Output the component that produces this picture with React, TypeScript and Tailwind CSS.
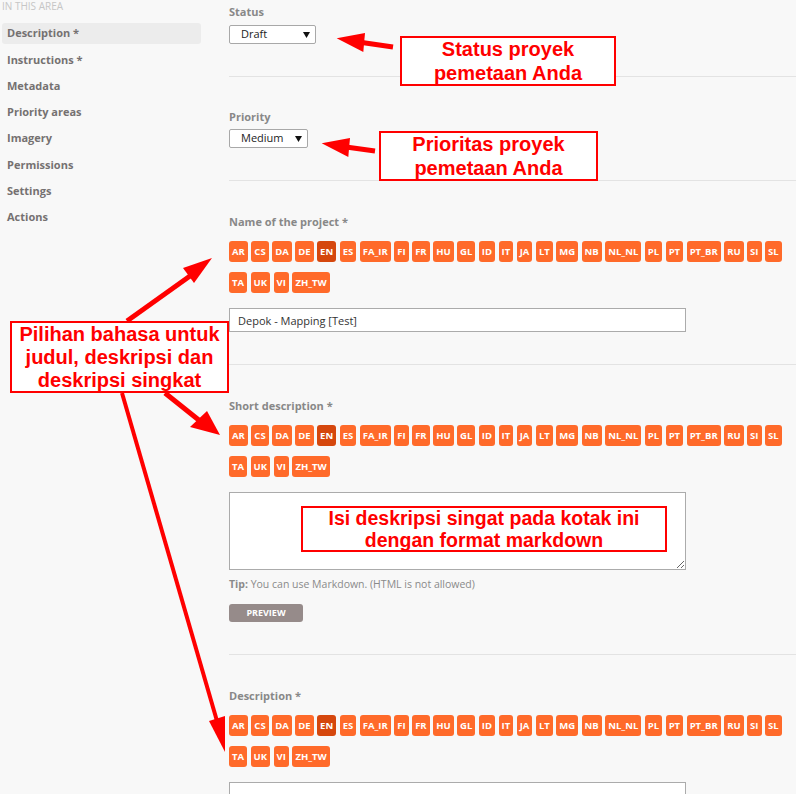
import clsx from "clsx";

const NAV = [
  "Description *",
  "Instructions *",
  "Metadata",
  "Priority areas",
  "Imagery",
  "Permissions",
  "Settings",
  "Actions",
];

const LANGS_ROW1 = [
  "AR", "CS", "DA", "DE", "EN", "ES", "FA_IR", "FI", "FR", "HU", "GL", "ID",
  "IT", "JA", "LT", "MG", "NB", "NL_NL", "PL", "PT", "PT_BR", "RU", "SI", "SL",
];
const LANGS_ROW2 = ["TA", "UK", "VI", "ZH_TW"];

function LangButtons() {
  const badge = (code: string) => (
    <span
      key={code}
      className={clsx(
        "h-[21px] px-[3px] flex items-center rounded-[3px] text-[9.5px] font-bold text-white leading-none",
        code === "EN" ? "bg-[#d5470d]" : "bg-[#ff6a2a]"
      )}
    >
      {code}
    </span>
  );
  return (
    <div className="mt-[12px] flex flex-col gap-[10px]">
      <div className="flex gap-[3.5px]">{LANGS_ROW1.map(badge)}</div>
      <div className="flex gap-[3.5px]">{LANGS_ROW2.map(badge)}</div>
    </div>
  );
}

function FakeSelect({ value, width }: { value: string; width: string }) {
  return (
    <div
      className={clsx(
        "h-[19px] bg-white border border-[#a8a8a8] rounded-[2px] flex items-center justify-between pl-[11px] pr-[5px] text-[11px] text-[#222]",
        width
      )}
    >
      <span>{value}</span>
      <svg width="7" height="6" viewBox="0 0 7 6">
        <path d="M0 0 L7 0 L3.5 6 Z" fill="#111" />
      </svg>
    </div>
  );
}

function Label({ children }: { children: string }) {
  return <div className="text-[11px] leading-[14px] font-bold text-[#888]">{children}</div>;
}

function Note({ className, lines, size }: { className: string; lines: string[]; size: string }) {
  return (
    <div
      className={clsx(
        "absolute bg-white border-2 border-[#ff0000] flex flex-col items-center justify-center font-['Liberation_Sans',Arial,sans-serif] font-bold text-[#ff0000] text-center",
        size,
        className
      )}
    >
      {lines.map((l) => (
        <span key={l} className="whitespace-nowrap">{l}</span>
      ))}
    </div>
  );
}

export default function App() {
  return (
    <div className="relative w-[796px] h-[794px] overflow-hidden bg-[#f8f8f8] flex font-['Open_Sans',sans-serif]">
      <aside className="w-[229px] shrink-0 pl-[2px] pr-[28px]">
        <div className="text-[10px] leading-[12px] text-[#c6c6c6] uppercase">In this area</div>
        <nav className="mt-[11px] flex flex-col gap-[5.3px]">
          {NAV.map((item, i) => (
            <div
              key={item}
              className={clsx(
                "h-[21px] flex items-center pl-[5px] rounded-[3px] text-[11px] font-bold text-[#757171]",
                i === 0 && "bg-[#ececec]"
              )}
            >
              {item}
            </div>
          ))}
        </nav>
      </aside>

      <main className="flex-1">
        <section className="pt-[5px] pb-[32px] border-b border-[#e3e3e3]">
          <Label>Status</Label>
          <div className="mt-[6px]">
            <FakeSelect value="Draft" width="w-[87px]" />
          </div>
        </section>

        <section className="pt-[33px] pb-[32px] border-b border-[#e3e3e3]">
          <Label>Priority</Label>
          <div className="mt-[5px]">
            <FakeSelect value="Medium" width="w-[79px]" />
          </div>
        </section>

        <section className="pt-[34px] pb-[32px] border-b border-[#e3e3e3]">
          <Label>Name of the project *</Label>
          <LangButtons />
          <input
            readOnly
            value="Depok - Mapping [Test]"
            className="mt-[15px] block w-[457px] h-[24px] bg-white border border-[#ababab] pl-[8px] text-[11px] text-[#333] outline-none"
          />
        </section>

        <section className="pt-[34px] pb-[32px] border-b border-[#e3e3e3]">
          <Label>Short description *</Label>
          <LangButtons />
          <textarea
            readOnly
            className="mt-[15px] block w-[457px] h-[78px] bg-white border border-[#ababab] outline-none"
          />
          <p className="mt-[7px] text-[10.5px] leading-[14px] text-[#8a8a8a]">
            <b>Tip:</b> You can use Markdown. (HTML is not allowed)
          </p>
          <button className="mt-[13px] block w-[74px] h-[18px] rounded-[3px] bg-[#968b8a] text-white text-[9px] font-bold uppercase">
            Preview
          </button>
        </section>

        <section className="pt-[34px]">
          <Label>Description *</Label>
          <LangButtons />
          <textarea
            readOnly
            className="mt-[15px] block w-[457px] h-[78px] bg-white border border-[#ababab] outline-none"
          />
        </section>
      </main>

      <Note
        className="left-[400px] top-[36px] w-[216px] h-[50px] leading-[24px]"
        size="text-[20px]"
        lines={["Status proyek", "pemetaan Anda"]}
      />
      <Note
        className="left-[379px] top-[131px] w-[219px] h-[50px] leading-[24px]"
        size="text-[20px]"
        lines={["Prioritas proyek", "pemetaan Anda"]}
      />
      <Note
        className="left-[10px] top-[321px] w-[219px] h-[72px] leading-[23px]"
        size="text-[20px]"
        lines={["Pilihan bahasa untuk", "judul, deskripsi dan", "deskripsi singkat"]}
      />
      <Note
        className="left-[301px] top-[506px] w-[366px] h-[46px] leading-[22px]"
        size="text-[19.5px]"
        lines={["Isi deskripsi singat pada kotak ini", "dengan format markdown"]}
      />

      <svg className="absolute inset-0 pointer-events-none" width="796" height="794" viewBox="0 0 796 794">
        <g fill="#ff0000" stroke="#ff0000" strokeLinecap="butt">
          <line x1="393" y1="47" x2="362" y2="42.5" strokeWidth="5" />
          <polygon points="336.7,38.3 365,33 363.3,52" stroke="none" />

          <line x1="375" y1="151" x2="346" y2="147" strokeWidth="5" />
          <polygon points="321.7,143.3 350,138 348.3,157" stroke="none" />

          <line x1="127" y1="321" x2="190" y2="276" strokeWidth="5" />
          <polygon points="212,258 183,268 194,283" stroke="none" />

          <line x1="165" y1="393" x2="200" y2="421" strokeWidth="5" />
          <polygon points="220,435 190,427 207,411" stroke="none" />

          <line x1="122" y1="393" x2="217" y2="721" strokeWidth="4" />
          <polygon points="225,752 209,721 225,716" stroke="none" />
        </g>
      </svg>
    </div>
  );
}
